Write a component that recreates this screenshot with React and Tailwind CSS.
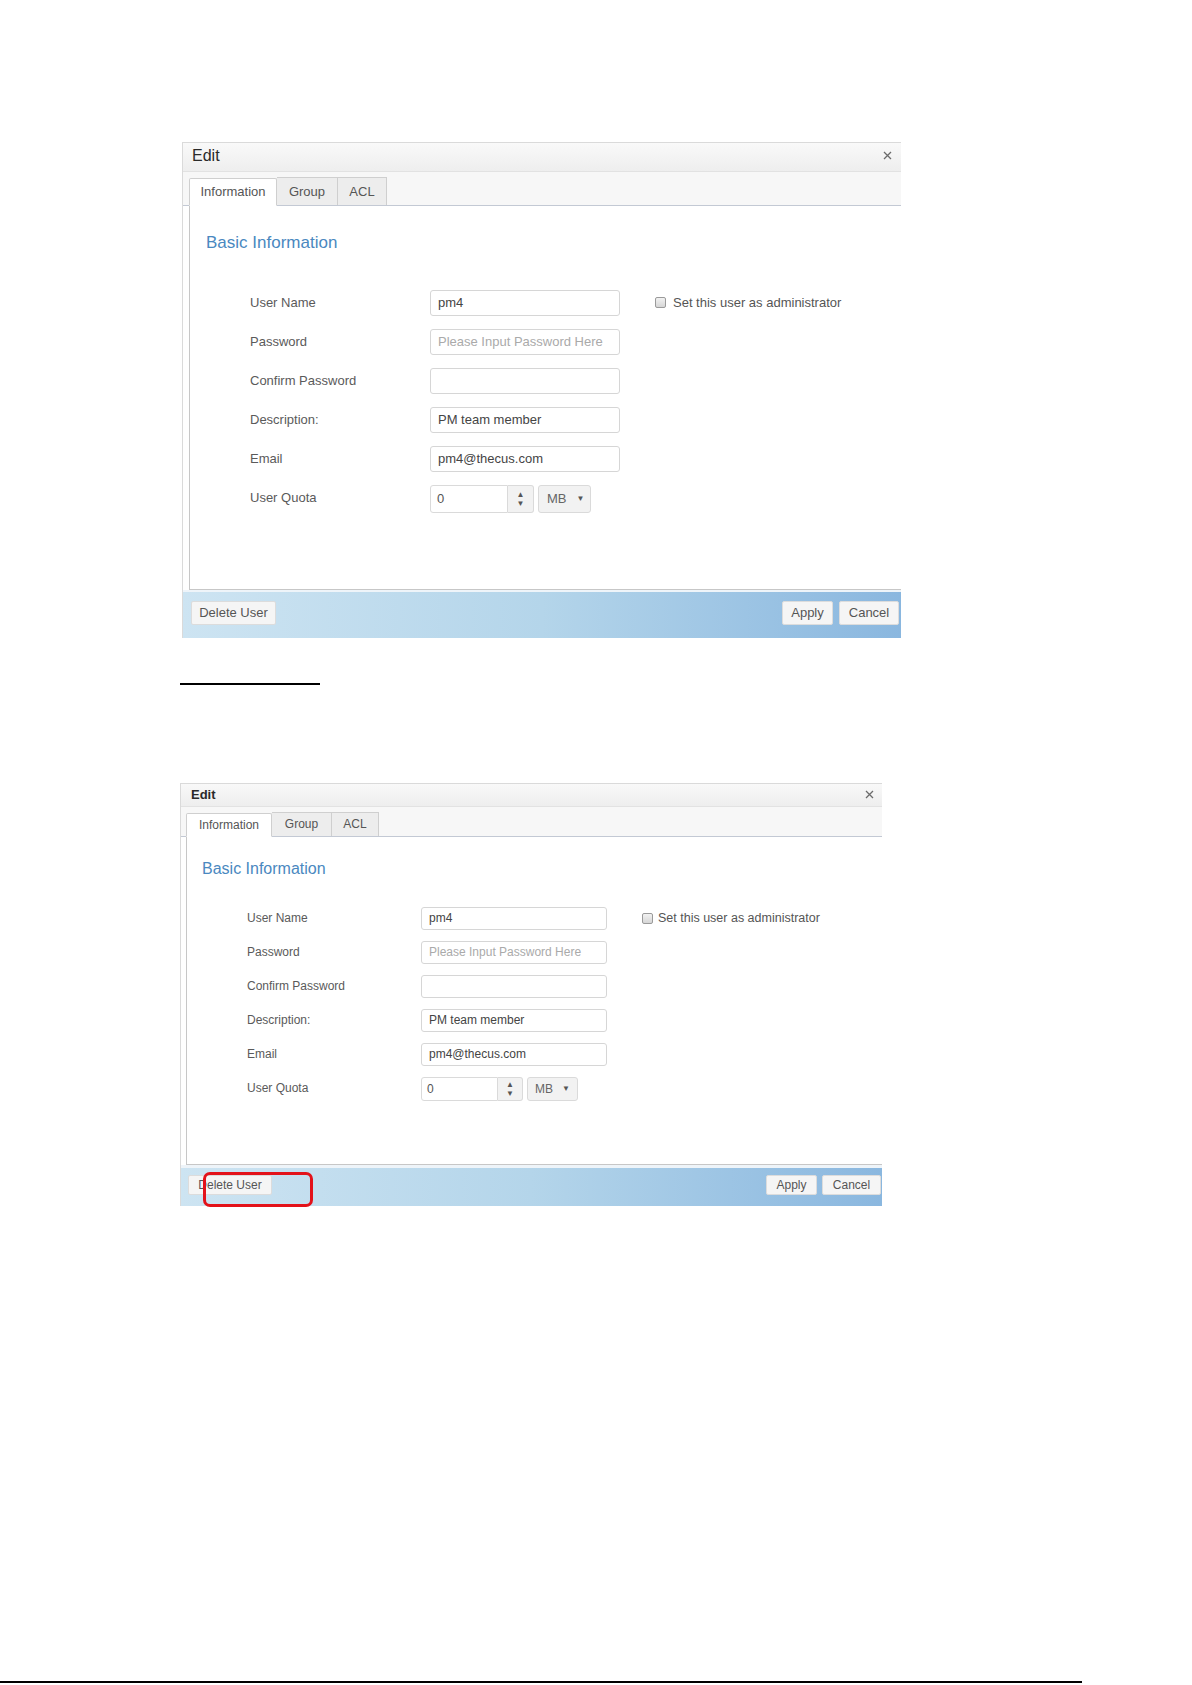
import React from 'react';

const FIELDS = [
    { label: 'User Name', value: 'pm4', admin: true },
    { label: 'Password', placeholder: 'Please Input Password Here' },
    { label: 'Confirm Password', value: '' },
    { label: 'Description:', value: 'PM team member' },
    { label: 'Email', value: 'pm4@thecus.com' },
];

// two captures of the same dialog, slightly different scale
const BIG = {
    box: 'w-[719px] h-[496px]',
    title: 'h-[29px] pl-[9px] pr-[9px] pb-[2px] text-[16px]',
    titleWeight: 'font-normal',
    strip: 'h-[34px] pt-[5px] pl-[6px]',
    tabs: ['w-[88px]', 'w-[61px]', 'w-[49px]'],
    tabText: 'text-[13px]',
    content: 'h-[385px] pl-[6px]',
    heading: 'pt-[27px] pl-[16px] text-[17px] leading-[20px]',
    rows: 'mt-[37px] pl-[60px]',
    row: 'h-[39px]',
    label: 'w-[180px] h-[26px] text-[13px]',
    input: 'w-[190px] h-[26px] text-[13px] pl-[7px]',
    check: 'ml-[35px] h-[26px] gap-[7px] text-[13px]',
    num: 'w-[78px] h-[28px] text-[13px] pl-[6px]',
    spin: 'w-[26px] h-[28px]',
    unit: 'ml-[4px] w-[53px] h-[28px] text-[13px] pl-[8px] gap-[10px]',
    gap: 'h-[2px]',
    footer: 'h-[46px] pt-[9px] pl-[8px] pr-[2px]',
    btn: 'h-[24px] text-[13px]',
    del: 'w-[85px]',
    apply: 'w-[51px]',
    cancel: 'w-[60px]',
    btnGap: 'gap-[6px]',
};

const SMALL = {
    box: 'w-[702px] h-[423px]',
    title: 'h-[23px] pl-[10px] pr-[8px] text-[13px]',
    titleWeight: 'font-bold',
    strip: 'h-[30px] pt-[5px] pl-[5px]',
    tabs: ['w-[86px]', 'w-[60px]', 'w-[47px]'],
    tabText: 'text-[12px]',
    content: 'h-[329px] pl-[5px]',
    heading: 'pt-[22px] pl-[15px] text-[16px] leading-[19px]',
    rows: 'mt-[29px] pl-[60px]',
    row: 'h-[34px]',
    label: 'w-[174px] h-[23px] text-[12px]',
    input: 'w-[186px] h-[23px] text-[12px] pl-[7px]',
    check: 'ml-[35px] h-[23px] gap-[5px] text-[12.5px]',
    num: 'w-[77px] h-[24px] text-[12px] pl-[5px]',
    spin: 'w-[25px] h-[24px]',
    unit: 'ml-[4px] w-[51px] h-[24px] text-[12px] pl-[7px] gap-[9px]',
    gap: 'h-[3px]',
    footer: 'h-[38px] pt-[7px] pl-[7px] pr-[1px]',
    btn: 'h-[20px] text-[12px]',
    del: 'w-[84px]',
    apply: 'w-[51px]',
    cancel: 'w-[59px]',
    btnGap: 'gap-[5px]',
};

function Close() {
    return (
        <svg width="9" height="9" viewBox="0 0 9 9">
            <path d="M1 1 L8 8 M8 1 L1 8" stroke="#6b6b6b" strokeWidth="1.3" />
        </svg>
    );
}

function Btn({ s, w, children }) {
    return (
        <div className={`${s.btn} ${w} flex items-center justify-center rounded-[2px] border border-[#dcdcdc] bg-[#f5f5f5] text-[#555]`}>
            {children}
        </div>
    );
}

function Dialog({ s, highlight }) {
    const tabNames = ['Information', 'Group', 'ACL'];
    return (
        <div className={`${s.box} relative flex flex-col border-l border-t border-[#dadada] bg-white`}>
            {/* title bar */}
            <div className={`${s.title} flex items-center justify-between border-b border-[#e2e2e2] bg-gradient-to-b from-[#f9f9f9] to-[#eeeeee] text-[#2a2a2a]`}>
                <span className={s.titleWeight}>Edit</span>
                <Close />
            </div>

            {/* tabs */}
            <div className={`${s.strip} flex items-end border-b border-[#c3c9d4] bg-[#f7f7f7]`}>
                {tabNames.map((t, i) => (
                    <div
                        key={t}
                        className={`${s.tabs[i]} ${s.tabText} h-full flex items-center justify-center border border-[#cfcfcf] text-[#555] ${
                            i === 0 ? 'bg-white border-b-white -mb-px rounded-t-[2px]' : 'bg-[#ededed] border-l-0 border-b-0'
                        }`}
                    >
                        {t}
                    </div>
                ))}
            </div>

            {/* content */}
            <div className={`${s.content} flex`}>
                <div className="flex-1 border-l border-b border-[#c7c7c7] bg-white">
                    <div className={`${s.heading} text-[#4a88c0]`}>Basic Information</div>
                    <div className={s.rows}>
                        {FIELDS.map(f => (
                            <div key={f.label} className={`${s.row} flex items-start`}>
                                <div className={`${s.label} flex items-center text-[#5a5a5a]`}>{f.label}</div>
                                <div className={`${s.input} flex items-center rounded-[3px] border border-[#d6d6d6] bg-white ${f.placeholder ? 'text-[#aaa]' : 'text-[#444]'}`}>
                                    {f.placeholder || f.value}
                                </div>
                                {f.admin && (
                                    <div className={`${s.check} flex items-center text-[#555]`}>
                                        <div className="w-[11px] h-[11px] rounded-[2px] border border-[#9a9a9a] bg-gradient-to-b from-[#f2f2f2] to-[#d6d6d6]" />
                                        Set this user as administrator
                                    </div>
                                )}
                            </div>
                        ))}
                        <div className={`${s.row} flex items-start`}>
                            <div className={`${s.label} flex items-center text-[#5a5a5a]`}>User Quota</div>
                            <div className="flex items-center">
                                <div className={`${s.num} flex items-center rounded-l-[3px] border border-[#dadada] bg-white text-[#555]`}>0</div>
                                <div className={`${s.spin} flex flex-col items-center justify-center rounded-r-[3px] border border-l-0 border-[#dadada] bg-[#f2f2f2] text-[#555] text-[8px] leading-[9px]`}>
                                    <span>▲</span>
                                    <span>▼</span>
                                </div>
                                <div className={`${s.unit} flex items-center rounded-[3px] border border-[#dadada] bg-[#f2f2f2] text-[#666]`}>
                                    MB
                                    <span className="text-[8px] text-[#555]">▼</span>
                                </div>
                            </div>
                        </div>
                    </div>
                </div>
            </div>

            <div className={`${s.gap} bg-[#eef4f9]`} />

            {/* footer */}
            <div className={`${s.footer} flex items-start justify-between bg-gradient-to-r from-[#cde4f2] via-[#b4d5ea] to-[#8ab7df]`}>
                <Btn s={s} w={s.del}>Delete User</Btn>
                <div className={`flex ${s.btnGap}`}>
                    <Btn s={s} w={s.apply}>Apply</Btn>
                    <Btn s={s} w={s.cancel}>Cancel</Btn>
                </div>
            </div>

            {highlight && (
                <div className="absolute left-[22px] top-[388px] w-[110px] h-[35px] rounded-[7px] border-[3px] border-[#e3121a]" />
            )}
        </div>
    );
}

export default function App() {
    return (
        <div className="w-[1192px] h-[1685px] bg-white font-['Liberation_Sans',Arial,sans-serif] overflow-hidden">
            <div className="pt-[142px] pl-[182px]">
                <Dialog s={BIG} />
            </div>
            <div className="ml-[180px] mt-[45px] w-[140px] h-[2px] bg-black" />
            <div className="mt-[98px] pl-[180px]">
                <Dialog s={SMALL} highlight />
            </div>
            <div className="mt-[475px] w-[1082px] h-[2px] bg-black" />
        </div>
    );
}
